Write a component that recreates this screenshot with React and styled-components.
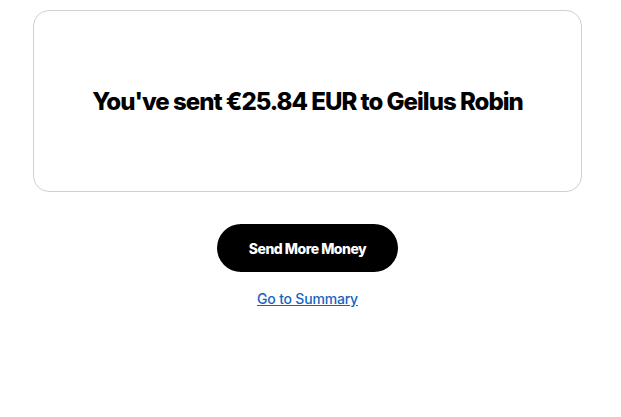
import styled, { createGlobalStyle } from "styled-components";

const GlobalStyle = createGlobalStyle`
    body {
        margin: 0;
        background: #ffffff;
        font-family: "Inter", "Liberation Sans", sans-serif;
    }
`;

const Page = styled.div`
    padding: 10px 39px 0 33px;
    display: flex;
    flex-direction: column;
    align-items: center;
`;

const Card = styled.div`
    width: 100%;
    height: 182px;
    box-sizing: border-box;
    border: 1px solid #d0d0d0;
    border-radius: 16px;
    display: flex;
    align-items: center;
    justify-content: center;
`;

const Title = styled.h1`
    margin: 0;
    font-size: 24px;
    font-weight: 800;
    letter-spacing: -1px;
    color: #000;
`;

const Button = styled.button`
    margin-top: 32px;
    width: 181px;
    height: 48px;
    border: none;
    border-radius: 24px;
    background: #000;
    color: #fff;
    font-family: inherit;
    font-size: 14px;
    font-weight: 800;
    letter-spacing: -0.5px;
    cursor: pointer;
`;

const Link = styled.a`
    margin-top: 18px;
    font-size: 14px;
    font-weight: 500;
    letter-spacing: -0.2px;
    color: #1565c0;
    text-decoration: underline;
    cursor: pointer;
`;

const App = () => {
    return (
        <>
            <GlobalStyle />
            <Page>
                <Card>
                    <Title>You've sent €25.84 EUR to Geilus Robin</Title>
                </Card>
                <Button>Send More Money</Button>
                <Link>Go to Summary</Link>
            </Page>
        </>
    )
}

export default App;
